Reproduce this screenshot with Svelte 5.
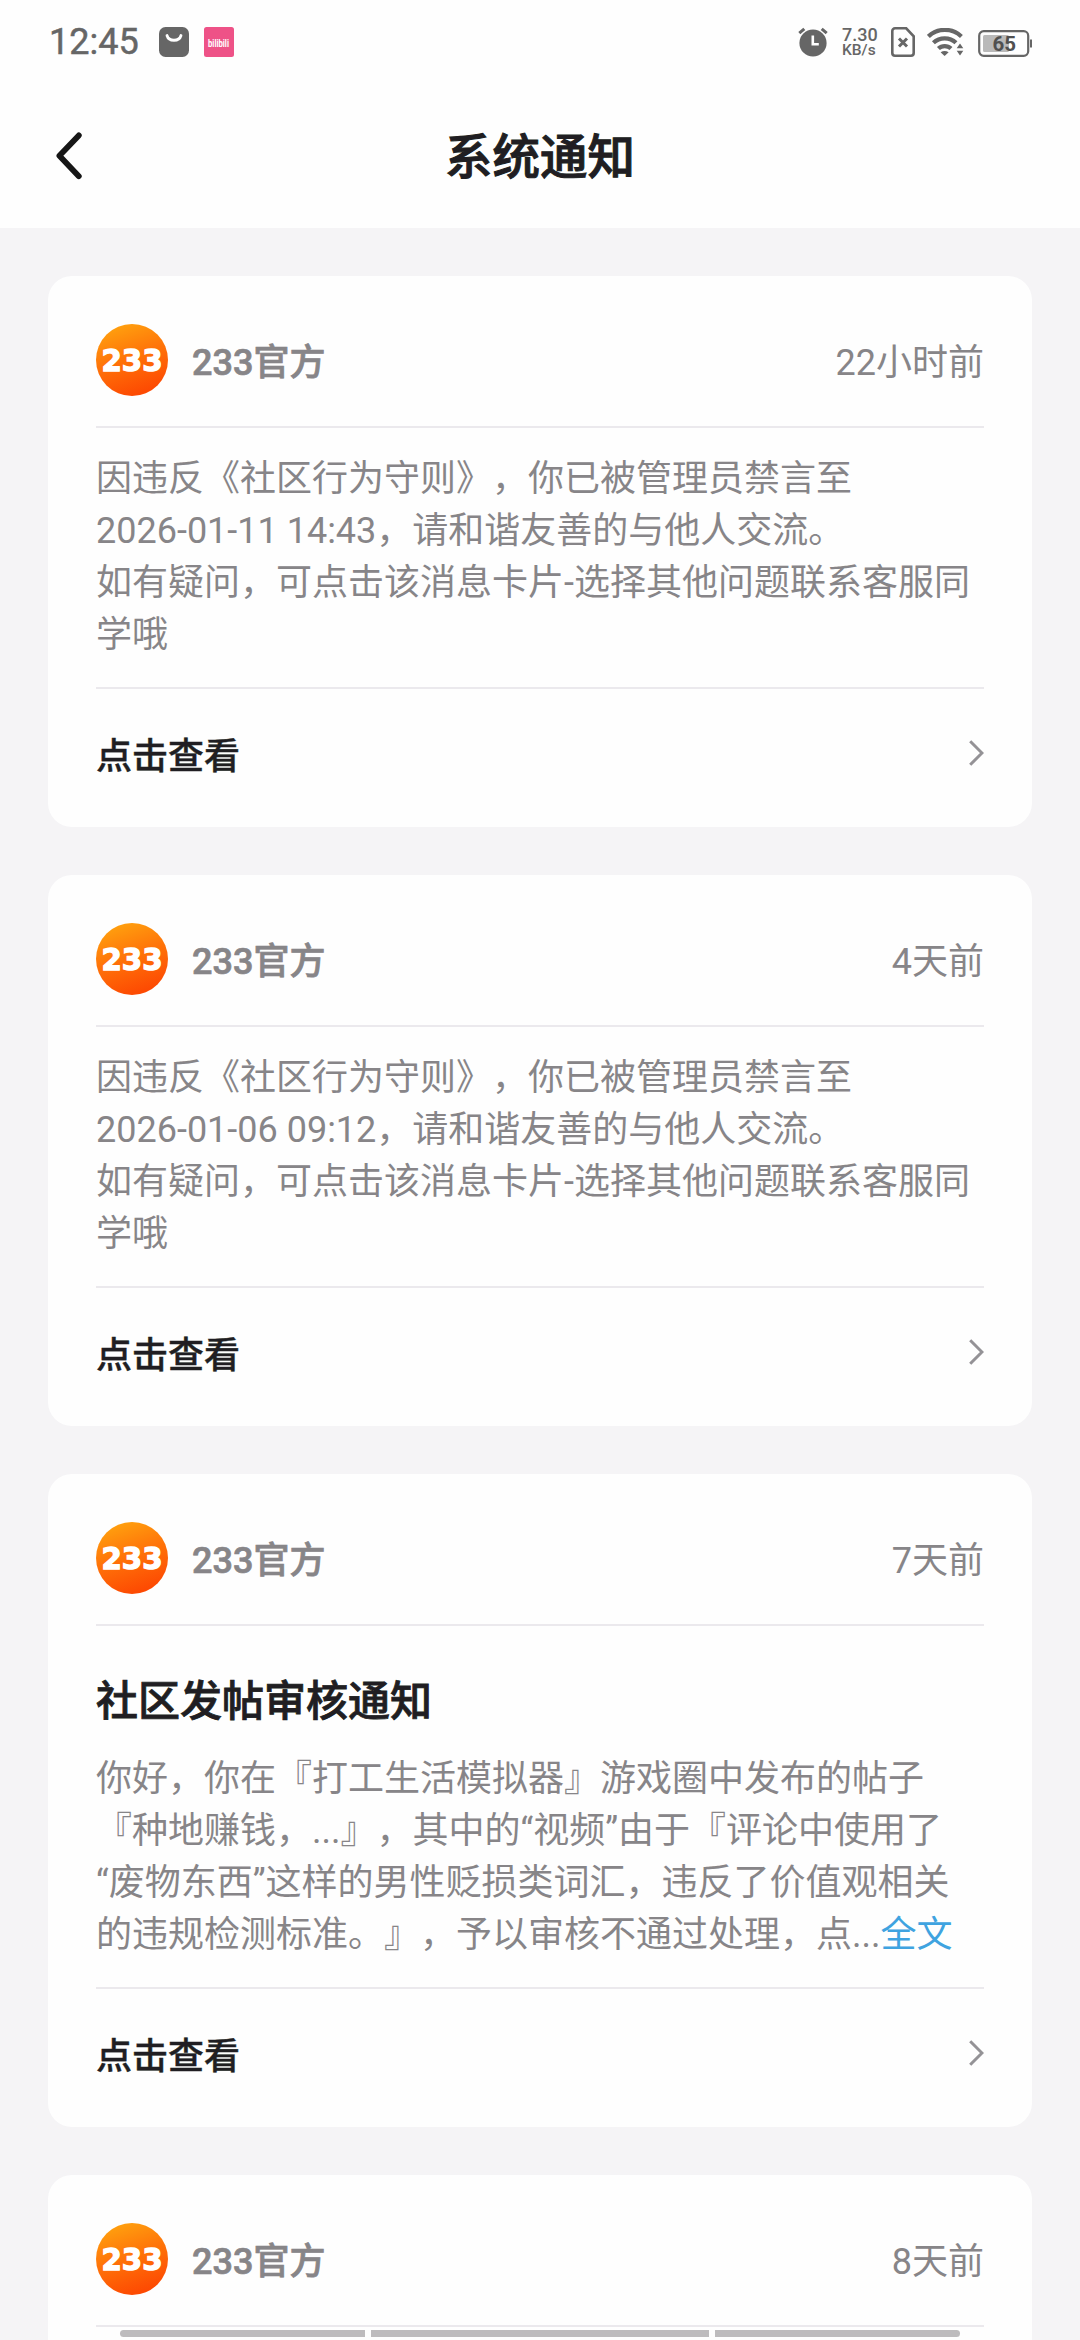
<script>
  const banText = (until) => [
    "因违反《社区行为守则》，你已被管理员禁言至",
    `${until}，请和谐友善的与他人交流。`,
    "如有疑问，可点击该消息卡片-选择其他问题联系客服同",
    "学哦",
  ];

  let notices = [
    { id: 1, time: "22小时前", lines: banText("2026-01-11 14:43") },
    { id: 2, time: "4天前", lines: banText("2026-01-06 09:12") },
    {
      id: 3,
      time: "7天前",
      title: "社区发帖审核通知",
      lines: [
        "你好，你在『打工生活模拟器』游戏圈中发布的帖子",
        "『种地赚钱，...』，其中的“视频”由于『评论中使用了",
        "“废物东西”这样的男性贬损类词汇，违反了价值观相关",
        "的违规检测标准。』，予以审核不通过处理，点...",
      ],
      more: true,
    },
    { id: 4, time: "8天前", lines: [] },
  ];
</script>

<div class="screen">
  <div class="status-bar">
    <span class="clock">12:45</span>
    <svg class="app-icon" viewBox="0 0 30 30">
      <rect width="30" height="30" rx="6.5" fill="#666" />
      <path d="M8 8.5a7.2 6.2 0 0 0 14 0" fill="none" stroke="#fff" stroke-width="2.8" stroke-linecap="round" />
    </svg>
    <svg class="app-icon" viewBox="0 0 30 30">
      <rect width="30" height="30" rx="2.5" fill="#ee5287" />
      <text class="app-name" transform="translate(4 20) scale(0.86 1.25)">bilibili</text>
    </svg>

    <div class="status-right">
      <svg class="alarm" viewBox="0 0 30 30">
        <circle cx="15" cy="16" r="13.6" fill="#666" />
        <path d="M1.3 6.2 6.3 1.8M28.7 6.2 23.7 1.8" stroke="#666" stroke-width="3" />
        <path d="M14.8 8.5v8.8h6" fill="none" stroke="#fff" stroke-width="2.6" />
      </svg>
      <div class="speed">
        <span class="rate">7.30</span>
        <span class="unit">KB/s</span>
      </div>
      <svg class="sim" viewBox="0 0 24 30" fill="none" stroke="#666" stroke-width="2.6">
        <path d="M4 1.3h11.2l7.5 8V26a2.7 2.7 0 0 1-2.7 2.7H4A2.7 2.7 0 0 1 1.3 26V4A2.7 2.7 0 0 1 4 1.3z" />
        <path d="M8 11.5l8 8m0-8l-8 8" stroke-width="3" />
      </svg>
      <svg class="wifi" viewBox="0 0 37 28" fill="none" stroke="#666" stroke-width="4.2">
        <path d="M1.4 8.4a24 24 0 0 1 33 0" />
        <path d="M6.4 14.8a16.4 16.4 0 0 1 22.6 0" />
        <path d="M11.4 20.6a9 9 0 0 1 12.6 0" />
        <path d="M13.6 24.2q4-2.6 8 0L17.6 28z" fill="#666" stroke="none" />
        <path d="M28.4 15.5h8.6V28h-8.6z" fill="#fefefe" stroke="none" />
        <path d="M33 15.4l3.3 4.8h-6.6zM33 27.6l3.3-4.8h-6.6z" fill="#666" stroke="none" />
      </svg>
      <svg class="battery" viewBox="0 0 54 27">
        <rect x="1.2" y="1.2" width="49" height="24.6" rx="4.5" fill="none" stroke="#666" stroke-width="2.2" />
        <rect x="5" y="5" width="26" height="17" rx="1.5" fill="#b9b9b9" />
        <rect x="52" y="9.5" width="2" height="8" fill="#666" />
        <text class="charge" x="26.3" y="21" text-anchor="middle">65</text>
      </svg>
    </div>
  </div>

  <header class="nav-bar">
    <button class="back-btn" aria-label="返回">
      <svg viewBox="0 0 26 48" fill="none" stroke="#161616" stroke-width="5.8" stroke-linecap="round" stroke-linejoin="round">
        <path d="M22.8 3.4 3.4 23.8 22.8 44.2" />
      </svg>
    </button>
    <h1>系统通知</h1>
  </header>

  <main class="notice-list">
    {#each notices as notice (notice.id)}
      <article class="card">
        <div class="card-header">
          <svg class="avatar" viewBox="0 0 72 72">
            <defs>
              <linearGradient id="avatar-{notice.id}" x1="0.15" y1="0" x2="0.5" y2="1">
                <stop offset="0" stop-color="#ffa60f" />
                <stop offset="0.5" stop-color="#ff7409" />
                <stop offset="1" stop-color="#fd4a02" />
              </linearGradient>
            </defs>
            <circle cx="36" cy="36" r="36" fill="url(#avatar-{notice.id})" />
            <text class="logo-text" x="5.5" y="47.4" textLength="61" lengthAdjust="spacingAndGlyphs">233</text>
          </svg>
          <span class="sender">233官方</span>
          <span class="time">{notice.time}</span>
        </div>

        {#if notice.lines.length > 0}
          <div class="card-body" class:titled={notice.title}>
            {#if notice.title}
              <h2>{notice.title}</h2>
            {/if}
            {#each notice.lines as line, i}
              <p>{line}{#if notice.more && i === notice.lines.length - 1}<a class="more" href="#full">全文</a>{/if}</p>
            {/each}
          </div>

          <div class="card-footer">
            <span>点击查看</span>
            <svg class="chevron" viewBox="0 0 16 26" fill="none" stroke="#949296" stroke-width="3">
              <path d="M2.2 1.2 14 13 2.2 24.8" />
            </svg>
          </div>
        {/if}
      </article>
    {/each}
  </main>

  <div class="gesture-bar">
    <i></i>
    <i class="wide"></i>
    <i></i>
  </div>
</div>

<style>
  :global(body) {
    margin: 0;
    background: #f5f4f6;
  }

  .screen {
    position: relative;
    display: flex;
    flex-direction: column;
    width: 1080px;
    height: 2340px;
    overflow: hidden;
    background: #f5f4f6;
    font-family: Roboto, "Noto Sans CJK SC", sans-serif;
    text-spacing-trim: space-all;
  }

  .status-bar {
    display: flex;
    flex: none;
    align-items: center;
    box-sizing: border-box;
    height: 84px;
    padding: 0 48px 0 49px;
    background: #fefefe;
    color: #666;
  }

  .clock {
    width: 110px;
    font-size: 36px;
    line-height: 42px;
    -webkit-text-stroke: 0.5px currentColor;
  }

  .app-icon {
    width: 30px;
    height: 30px;
    margin-right: 15px;
  }

  .app-name {
    fill: #fff;
    font-size: 9px;
    font-weight: 700;
  }

  .status-right {
    display: flex;
    align-items: center;
    margin-left: auto;
  }

  .alarm {
    width: 30px;
    height: 30px;
    margin-right: 14px;
  }

  .speed {
    display: flex;
    flex-direction: column;
    width: 49px;
    font-weight: 500;
  }

  .rate {
    font-size: 18px;
    line-height: 16px;
  }

  .unit {
    font-size: 15.5px;
    line-height: 15px;
  }

  .sim {
    width: 24px;
    height: 30px;
    margin-right: 12px;
  }

  .wifi {
    width: 37px;
    height: 28px;
    margin-right: 14px;
  }

  .battery {
    width: 54px;
    height: 27px;
    margin: 3px 0 0;
  }

  .charge {
    fill: #505050;
    font-size: 20.5px;
    font-weight: 700;
  }

  .nav-bar {
    display: grid;
    grid-template-columns: 120px 1fr 120px;
    flex: none;
    align-items: center;
    height: 144px;
    background: #fefefe;
  }

  .back-btn {
    display: flex;
    padding: 0 0 0 56px;
    border: none;
    background: none;
  }

  .back-btn svg {
    width: 26px;
    height: 48px;
  }

  h1 {
    margin: 0;
    padding-top: 3px;
    color: #201e22;
    font-size: 47.5px;
    font-weight: 500;
    line-height: 70px;
    text-align: center;
    -webkit-text-stroke: 1px currentColor;
  }

  .notice-list {
    display: flex;
    flex: none;
    flex-direction: column;
    gap: 48px;
    padding: 48px;
  }

  .card {
    padding: 0 48px;
    border-radius: 24px;
    background: #fefefe;
  }

  .card:last-child {
    min-height: 300px;
  }

  .card-header {
    display: flex;
    align-items: center;
    height: 72px;
    padding: 48px 0 30px;
    border-bottom: 2px solid #ebe9ed;
    color: #878588;
    font-size: 36px;
  }

  .avatar {
    width: 72px;
    height: 72px;
    margin-right: 24px;
  }

  .logo-text {
    fill: #fff;
    stroke: #fff;
    stroke-width: 1.4;
    font-family: "DejaVu Sans", sans-serif;
    font-size: 31px;
    font-weight: 700;
  }

  .sender,
  .time {
    padding-bottom: 2px;
  }

  .sender {
    font-weight: 500;
    -webkit-text-stroke: 0.7px currentColor;
  }

  .time {
    margin-left: auto;
  }

  .card-body {
    padding: 25px 0 26px;
    border-bottom: 2px solid #ebe9ed;
    color: #878588;
    font-size: 36px;
  }

  .titled {
    padding-top: 50px;
  }

  h2 {
    margin: 0 0 25px;
    color: #201e22;
    font-size: 42px;
    font-weight: 500;
    line-height: 52px;
    -webkit-text-stroke: 0.8px currentColor;
  }

  p {
    height: 52px;
    margin: 0;
    line-height: 52px;
    white-space: nowrap;
  }

  .more {
    color: #3fa3e0;
    text-decoration: none;
  }

  .card-footer {
    display: flex;
    align-items: center;
    justify-content: space-between;
    box-sizing: border-box;
    height: 138px;
    padding-bottom: 11px;
    color: #201e22;
    font-size: 36px;
    font-weight: 500;
    -webkit-text-stroke: 0.4px currentColor;
  }

  .chevron {
    width: 16px;
    height: 26px;
  }

  .gesture-bar {
    position: absolute;
    right: 120px;
    bottom: 3px;
    left: 120px;
    display: flex;
    gap: 6px;
    height: 7px;
  }

  .gesture-bar i {
    flex: 245;
    background: #bdbbbd;
  }

  .gesture-bar i.wide {
    flex: 338;
  }

  .gesture-bar i:first-child {
    border-radius: 4px 0 0 4px;
  }

  .gesture-bar i:last-child {
    border-radius: 0 4px 4px 0;
  }
</style>
